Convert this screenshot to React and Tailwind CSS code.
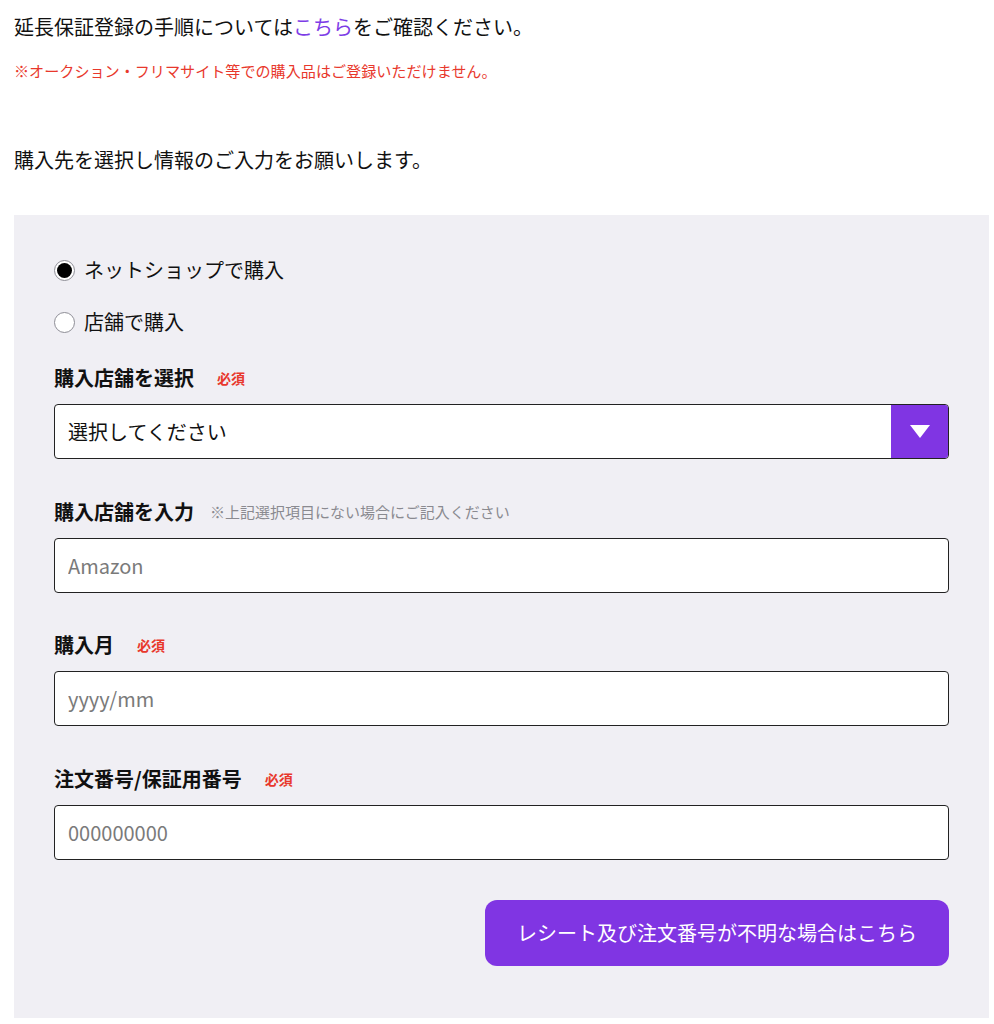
import React, { useState } from 'react';

const FONT = { fontFamily: '"Noto Sans CJK JP", "Noto Sans", sans-serif' };

function Required() {
  return <span className="ml-[23px] text-[14px] font-bold text-[#e8382c]">必須</span>;
}

function Radio({ checked, label, onClick }) {
  return (
    <button type="button" onClick={onClick} className="flex items-center h-[28px] text-left">
      <span className="w-[21px] h-[21px] rounded-full border border-[#8e8e96] bg-white flex items-center justify-center">
        {checked && <span className="w-[15px] h-[15px] rounded-full bg-black" />}
      </span>
      <span className="ml-[9px] text-[20px] text-[#111]">{label}</span>
    </button>
  );
}

function Field({ label, extra, children, className = '' }) {
  return (
    <div className={className}>
      <div className="flex items-center h-[28px] mb-[12px]">
        <span className="text-[20px] font-bold text-[#111]">{label}</span>
        {extra}
      </div>
      {children}
    </div>
  );
}

function TextInput({ placeholder }) {
  return (
    <input
      type="text"
      placeholder={placeholder}
      className="w-full h-[55px] rounded-[4px] border border-[#222] bg-white px-[13px] text-[20px] text-[#111] placeholder:text-[#7a7a7a] outline-none"
      style={FONT}
    />
  );
}

export default function App() {
  const [where, setWhere] = useState('net');

  return (
    <div className="min-h-screen bg-white pl-[14px] pr-[5px] pb-[10px] text-[#111]" style={FONT}>
      <p className="pt-[13px] text-[20px] leading-[28px]">
        延長保証登録の手順については<a href="#" className="text-[#7d3ce6]">こちら</a>をご確認ください。
      </p>
      <p className="mt-[19px] text-[15.1px] leading-[20px] text-[#e8382c]">
        ※オークション・フリマサイト等での購入品はご登録いただけません。
      </p>
      <p className="mt-[66px] text-[20px] leading-[28px]">購入先を選択し情報のご入力をお願いします。</p>

      <div className="mt-[41px] bg-[#f0eff4] pt-[41px] pb-[52px] px-[40px]">
        <div className="flex flex-col gap-[24px]">
          <Radio checked={where === 'net'} label="ネットショップで購入" onClick={() => setWhere('net')} />
          <Radio checked={where === 'store'} label="店舗で購入" onClick={() => setWhere('store')} />
        </div>

        <Field label="購入店舗を選択" extra={<Required />} className="mt-[28px]">
          <div className="flex h-[55px] rounded-[4px] border border-[#222] bg-white overflow-hidden">
            <div className="flex-1 flex items-center px-[13px] text-[20px]">選択してください</div>
            <div className="w-[57px] bg-[#8035e3] flex items-center justify-center">
              <svg width="20" height="13" viewBox="0 0 20 13">
                <path d="M0 0 H20 L10 13 Z" fill="#fff" />
              </svg>
            </div>
          </div>
        </Field>

        <Field
          label="購入店舗を入力"
          extra={<span className="ml-[16px] text-[15px] text-[#8a8a90]">※上記選択項目にない場合にご記入ください</span>}
          className="mt-[39px]"
        >
          <TextInput placeholder="Amazon" />
        </Field>

        <Field label="購入月" extra={<Required />} className="mt-[38px]">
          <TextInput placeholder="yyyy/mm" />
        </Field>

        <Field label="注文番号/保証用番号" extra={<Required />} className="mt-[39px]">
          <TextInput placeholder="000000000" />
        </Field>

        <div className="mt-[40px] flex justify-end">
          <button
            type="button"
            className="w-[464px] h-[66px] rounded-[12px] bg-[#8035e3] text-white text-[20px]"
            style={FONT}
          >
            レシート及び注文番号が不明な場合はこちら
          </button>
        </div>
      </div>
    </div>
  );
}
